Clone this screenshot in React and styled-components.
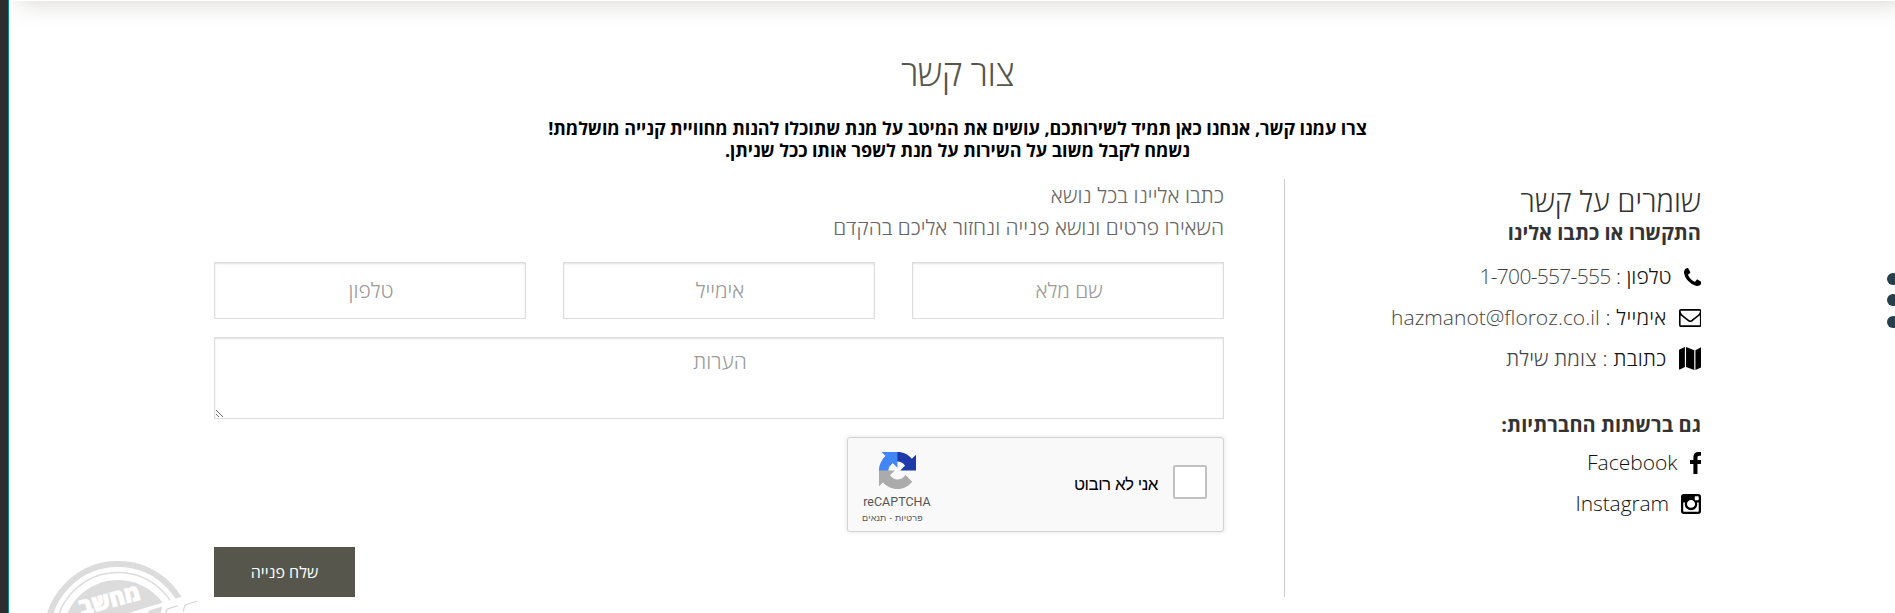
import React from "react";
import styled, { createGlobalStyle } from "styled-components";

const Global = createGlobalStyle`
  * { box-sizing: border-box; }
  html, body { margin: 0; background: #fff; overflow: hidden; }
  body { font-family: "Open Sans", "Noto Sans", sans-serif; font-weight: 300; }
`;

const Page = styled.div`
  position: relative;
  display: flex;
  width: 1895px;
  height: 613px;
  overflow: hidden;
  background: #fff;
`;
const Edge = styled.div`
  width: 9px;
  flex: none;
  background: #2d2d2d;
  border-right: 1px solid #008a8c;
`;
const Content = styled.main`
  flex: 1;
  direction: rtl;
  overflow: hidden;
  padding: 0 194px 0 205px;
`;
const HeaderEdge = styled.div`
  margin: -59px -194px 0 -205px;
  height: 60px;
  background: #fff;
  box-shadow: 10px 1px 24px rgba(87, 86, 75, 0.26);
`;
const Line = styled.div`
  margin: ${(p) => p.$top || 0}px 0 0;
  font-size: ${(p) => p.$size}px;
  font-weight: ${(p) => p.$weight || 300};
  line-height: ${(p) => p.$lh}px;
  letter-spacing: ${(p) => p.$ls || 0}px;
  color: ${(p) => p.$color || "#333"};
  text-align: ${(p) => p.$align || "right"};
  white-space: nowrap;
`;
const Intro = styled.header`
  height: 178px;
  padding-top: 44px;
`;
const Columns = styled.div`
  display: flex;
  height: 418px;
`;
const Side = styled.aside`
  width: 417px;
  border-left: 1px solid #ccc;
  padding-top: 2px;
`;
const ContactList = styled.div`
  padding-top: ${(p) => p.$top}px;
`;
const ContactRow = styled.div`
  display: flex;
  align-items: center;
  gap: 12px;
  height: 41px;
  svg { display: block; flex: none; }
`;
const Label = styled.span`
  font-size: 21px;
  line-height: 28px;
  padding-bottom: 1px;
  color: #111;
  white-space: nowrap;
  letter-spacing: ${(p) => p.$ls || 0}px;
`;
const Value = styled.span`
  color: #444;
  letter-spacing: ${(p) => p.$ls || 0}px;
`;
const Form = styled.form`
  width: 1010px;
  margin-right: 60px;
`;
const Fields = styled.div`
  display: grid;
  grid-template-columns: repeat(3, 312px);
  column-gap: 37px;
  margin-top: 19px;
`;
const fieldLook = `
  border: 1px solid #ddd;
  background: #fff;
  box-shadow: inset 0 1px 2px rgba(0,0,0,0.12);
  color: #999;
  font: 300 21px "Open Sans", sans-serif;
  text-align: center;
  outline: none;
  border-radius: 0;
  &::placeholder { color: #999; opacity: 1; }
`;
const Input = styled.input`
  ${fieldLook}
  height: 57px;
  width: 312px;
  padding: 0 0 1px 2px;
`;
const Area = styled.textarea`
  ${fieldLook}
  display: block;
  width: 1010px;
  height: 82px;
  margin-top: 18px;
  padding: 9px 11px 9px 13px;
`;
const Captcha = styled.div`
  display: flex;
  justify-content: space-between;
  width: 377px;
  height: 95px;
  margin-top: 18px;
  padding: 0 16px 0 14px;
  border: 1px solid #d3d3d3;
  border-radius: 3px;
  background: #f9f9f9;
  box-shadow: 0 0 4px 1px rgba(0, 0, 0, 0.08);
`;
const Check = styled.div`
  display: flex;
  gap: 15px;
  padding-top: 27px;
`;
const Box = styled.span`
  width: 34px;
  height: 34px;
  border: 2px solid #c1c1c1;
  border-radius: 2px;
  background: #fff;
`;
const CheckText = styled.span`
  font: 400 17px/40px "Liberation Sans", sans-serif;
  letter-spacing: -0.5px;
  color: #000;
`;
const Brand = styled.div`
  display: flex;
  flex-direction: column;
  align-items: center;
  width: 70px;
  padding-top: 14px;
  color: #555;
  font: 400 12.5px/20px Roboto, sans-serif;
  svg { display: block; margin-bottom: 3px; }
`;
const Terms = styled.small`
  font: 400 9px/10px "Liberation Sans", sans-serif;
  letter-spacing: 0.15px;
  margin-right: 9px;
  margin-top: 1px;
  white-space: nowrap;
`;
const Submit = styled.button`
  display: block;
  margin: 15px auto 0 0;
  width: 141px;
  height: 50px;
  border: 0;
  background: #57564c;
  color: #fff;
  font: 450 16px "Open Sans", sans-serif;
`;
const Dots = styled.div`
  position: absolute;
  left: 1887px;
  top: 272.5px;
  display: grid;
  gap: 9.5px;
`;
const Dot = styled.i`
  width: 12px;
  height: 12px;
  border-radius: 50%;
  background: #263f4c;
`;
const Stamp = styled.svg`
  position: absolute;
  left: 40px;
  top: 555px;
`;
const StampText = styled.text`
  font: 800 23px "Open Sans", sans-serif;
  fill: #fff;
  stroke: #fff;
  stroke-width: 0.6px;
  text-anchor: middle;
`;

const icons = {
  phone: { box: "0 128 1408 1408", w: 17.5, h: 18, d: "M1408 1240q0 27-10 70.5t-21 68.5q-21 50-122 106-94 51-186 51-27 0-53-3.5t-57.5-12.5-47-14.5-55.5-20.5-49-18q-98-35-175-83-127-79-264-216t-216-264q-48-77-83-175-3-9-18-49t-20.5-55.5-14.5-47-12.5-57.5-3.5-53q0-92 51-186 56-101 106-122 25-11 68.5-21t70.5-10q14 0 21 3 18 6 53 76 11 19 30 54t35 63.5 31 53.5q3 4 17.5 25t21.5 35.5 7 28.5q0 20-28.5 50t-62 55-62 53-28.5 46q0 9 5 22.5t8.5 20.5 14 24 11.5 19q76 137 174 235t235 174q2 1 19 11.5t24 14 20.5 8.5 22.5 5q18 0 46-28.5t53-62 55-62 50-28.5q14 0 28.5 7t35.5 21.5 25 17.5q25 15 53.5 31t63.5 35 54 30q70 35 76 53 3 7 3 21z" },
  mail: { box: "0 256 1792 1408", w: 22.5, h: 18, d: "M1664 1504v-768q-32 36-69 66-268 206-426 338-51 43-83 67t-86.5 48.5-102.5 24.5h-2q-48 0-102.5-24.5t-86.5-48.5-83-67q-158-132-426-338-37-30-69-66v768q0 13 9.5 22.5t22.5 9.5h1472q13 0 22.5-9.5t9.5-22.5zm0-1051v-24.5l-.5-13-3-12.5-5.5-9-9-7.5-14-2.5h-1472q-13 0-22.5 9.5t-9.5 22.5q0 168 147 284 193 152 401 317 6 5 35 29.5t46 37.5 44.5 31.5 50.5 27.5 43 9h2q20 0 43-9t50.5-27.5 44.5-31.5 46-37.5 35-29.5q208-165 401-317 54-43 100.5-115.5t46.5-131.5zm128-37v1088q0 66-47 113t-113 47h-1472q-66 0-113-47t-47-113v-1088q0-66 47-113t113-47h1472q66 0 113 47t47 113z" },
  map: { box: "0 0 23 23", w: 22.5, h: 23, d: "M0 3.4Q0 2.9.5 2.6L6 .1V19.900L.9 22.400Q0 22.800 0 22zM7.200.1L15.600 3.200V22.900L7.200 19.900zM16.800 3.200L22.100.6Q23 .2 23 1V19.600Q23 20.100 22.500 20.400L16.800 22.900z" },
  facebook: { box: "479 0 864 1664", w: 11.5, h: 22, d: "M1343 12v264h-157q-86 0-116 36t-30 108v189h293l-39 296h-254v759h-306v-759h-255v-296h255v-218q0-186 104-288.500t277-102.500q147 0 228 12z" },
  instagram: { box: "128 128 1536 1536", w: 20, h: 20, d: "M1490 1426v-648h-135q20 63 20 131 0 126-64 232.500t-174 168.500-240 62q-197 0-337-135.500t-140-327.500q0-68 20-131h-141v648q0 26 17.500 43.500t43.500 17.500h1069q25 0 43-17.500t18-43.500zm-284-533q0-124-90.500-211.500t-218.500-87.500q-127 0-217.500 87.500t-90.500 211.500 90.500 211.500 217.500 87.500q128 0 218.500-87.500t90.500-211.500zm284-360v-165q0-28-20-48.500t-49-20.500h-174q-29 0-49 20.500t-20 48.500v165q0 29 20 49t49 20h174q29 0 49-20t20-49zm174-208v1142q0 81-58 139t-139 58h-1142q-81 0-139-58t-58-139v-1142q0-81 58-139t139-58h1142q81 0 139 58t58 139z" },
};
const Icon = ({ name }) => {
  const i = icons[name];
  return <svg width={i.w} height={i.h} viewBox={i.box} preserveAspectRatio="none"><path d={i.d} /></svg>;
};

export default function App() {
  return (
    <Page>
      <Global />
      <Edge />
      <Content>
        <HeaderEdge />
        <Intro>
          <Line as="h1" $size={35.5} $lh={54} $ls={-0.5} $weight={350} $align="center" $color="#57564c">צור קשר</Line>
          <Line $top={18} $size={18} $lh={22} $ls={-0.075} $weight={700} $align="center" $color="#000">צרו עמנו קשר, אנחנו כאן תמיד לשירותכם, עושים את המיטב על מנת שתוכלו להנות מחוויית קנייה מושלמת!</Line>
          <Line $size={18} $lh={22} $ls={-0.075} $weight={700} $align="center" $color="#000">נשמח לקבל משוב על השירות על מנת לשפר אותו ככל שניתן.</Line>
        </Intro>
        <Columns>
          <Side>
            <Line $size={29} $lh={40} $ls={0.1}>שומרים על קשר</Line>
            <Line $size={20} $lh={24} $weight={700}>התקשרו או כתבו אלינו</Line>
            <ContactList $top={11}>
              <ContactRow><Icon name="phone" /><Label>טלפון : <Value $ls={-0.7}>1-700-557-555</Value></Label></ContactRow>
              <ContactRow><Icon name="mail" /><Label $ls={0.25}>אימייל : <Value>hazmanot@floroz.co.il</Value></Label></ContactRow>
              <ContactRow><Icon name="map" /><Label $ls={0.3}>כתובת : <Value $ls={0.15}>צומת שילת</Value></Label></ContactRow>
            </ContactList>
            <Line $top={34} $size={20} $lh={24} $ls={0.05} $weight={700}>גם ברשתות החברתיות:</Line>
            <ContactList $top={5}>
              <ContactRow><Icon name="facebook" /><Label>Facebook</Label></ContactRow>
              <ContactRow><Icon name="instagram" /><Label $ls={-0.1}>Instagram</Label></ContactRow>
            </ContactList>
          </Side>
          <Form>
            <Line $size={21} $lh={32} $ls={0.1} $color="#666">כתבו אליינו בכל נושא</Line>
            <Line $size={21} $lh={32} $color="#666">השאירו פרטים ונושא פנייה ונחזור אליכם בהקדם</Line>
            <Fields>
              <Input placeholder="שם מלא" />
              <Input placeholder="אימייל" />
              <Input placeholder="טלפון" />
            </Fields>
            <Area placeholder="הערות" />
            <Captcha>
              <Check><Box /><CheckText>אני לא רובוט</CheckText></Check>
              <Brand>
                <svg width="37" height="37" viewBox="0 0 64 64">
                  <path fill="#1c3aa9" d="M64 31.955l-.033-1.37V4.687l-7.160 7.160C50.948 4.674 42.033.093 32.050.093c-10.400 0-19.622 4.960-25.458 12.640l11.736 11.860a15.550 15.550 0 0 1 4.754-5.334c2.050-1.600 4.952-2.906 8.968-2.906.485 0 .860.057 1.135.163 4.976.393 9.288 3.140 11.828 7.124l-8.307 8.307L64 31.953" />
                  <path fill="#4285f4" d="M31.862.094l-1.370.033H4.594l7.160 7.160C4.580 13.147 0 22.060 0 32.046c0 10.400 4.960 19.622 12.640 25.458L24.500 45.768a15.550 15.550 0 0 1-5.334-4.754c-1.600-2.050-2.906-4.952-2.906-8.968 0-.485.057-.860.163-1.135.393-4.976 3.140-9.288 7.124-11.828l8.307 8.307L31.860.095" />
                  <path fill="#ababab" d="M.001 32.045l.033 1.370v25.898l7.160-7.160c5.860 7.173 14.774 11.754 24.760 11.754 10.400 0 19.622-4.960 25.458-12.640l-11.736-11.860a15.550 15.550 0 0 1-4.754 5.334c-2.050 1.600-4.952 2.906-8.968 2.906-.485 0-.860-.057-1.135-.163-4.976-.393-9.288-3.140-11.828-7.124l8.307-8.307c-10.522.040-22.400.066-27.295-.005" />
                </svg>
                reCAPTCHA
                <Terms>פרטיות - תנאים</Terms>
              </Brand>
            </Captcha>
            <Submit type="button">שלח פנייה</Submit>
          </Form>
        </Columns>
      </Content>
      <Dots><Dot /><Dot /><Dot /></Dots>
      <Stamp width="165" height="58" viewBox="40 555 165 58">
        <circle cx="118" cy="635" r="71" fill="none" stroke="#dcdcdc" strokeWidth="6" />
        <circle cx="118" cy="635" r="62.500" fill="none" stroke="#dcdcdc" strokeWidth="1.500" />
        <circle cx="118" cy="635" r="55" fill="#dcdcdc" />
        <path fill="#fff" d="M129 613L205 589.500V613z" />
        <path fill="#dcdcdc" d="M148 613L149 610.500L162 606.500L161 613z" />
        <path fill="none" stroke="#d4d4d4" strokeWidth="1.200" d="M166 613Q166 609.500 169 608.500L178 605.700M183.500 611.500L184 608Q184.500 605.500 187 604.500L197.500 601" />
        <StampText direction="rtl" transform="translate(111.500 607.500) rotate(-15)">מחשב</StampText>
      </Stamp>
    </Page>
  );
}
